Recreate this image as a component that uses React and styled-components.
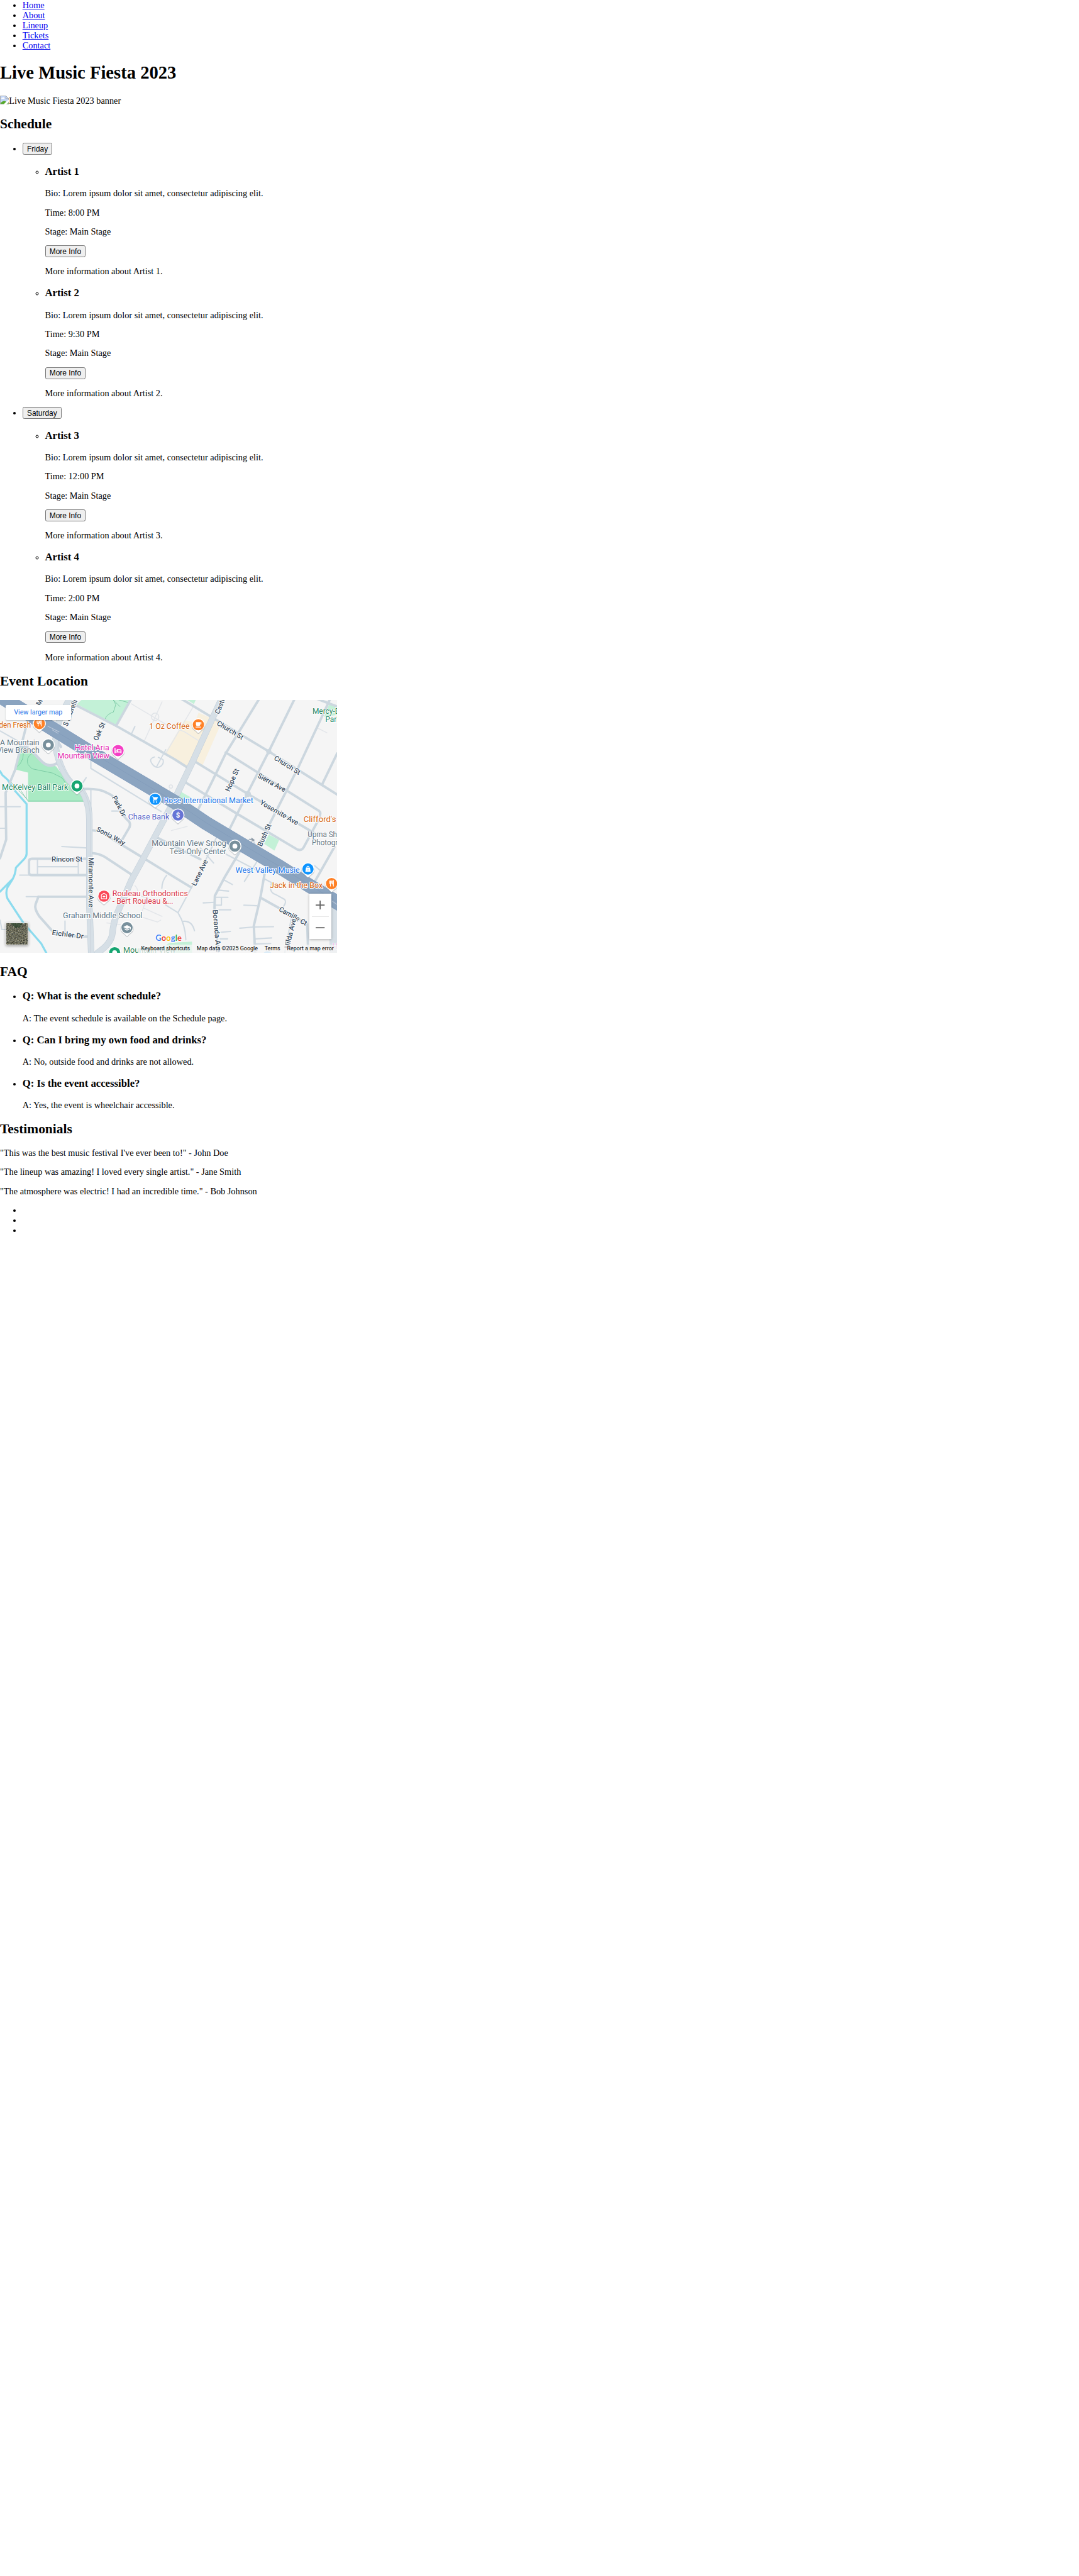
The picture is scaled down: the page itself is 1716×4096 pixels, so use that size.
import React from "react";
import styled, { createGlobalStyle, css } from "styled-components";

/* 1rem = 14.3px; every measure below is n/16 rem */
const u = (n) => `${n / 16}rem`;

const Global = createGlobalStyle`
  html { font-size: 14.3px; }
  body { margin: 0; background: #fff; color: #000; }
`;

const Page = styled.main`
  min-height: 4096px;
  font-family: "Liberation Serif", "Times New Roman", serif;
  font-size: 1rem;
  line-height: ${u(18)};
`;

const List = styled.ul`
  margin: ${(p) => p.$top || 0} 0 ${(p) => p.$bottom || 0};
  padding: 0 0 0 ${u(40)};
  list-style-type: ${(p) => p.$marker || "disc"};
`;

const NavLink = styled.a`
  color: #0000ee;
  text-decoration: underline;
`;

const Title = styled.h1`
  margin: ${u(21.44)} 0;
  font-size: 2rem;
  line-height: ${u(36.6)};
`;

const SectionTitle = styled.h2`
  margin: ${u(19.92)} 0;
  font-size: 1.5rem;
  line-height: ${u(27)};
`;

const ItemTitle = styled.h3`
  margin: ${u(18.72)} 0;
  font-size: 1.17rem;
  line-height: ${u(22)};
`;

const Text = styled.p`
  margin: 1rem 0;
`;

const Button = styled.button`
  display: inline-block;
  box-sizing: border-box;
  height: ${u(21)};
  margin: 0;
  padding: 0 ${u(7)};
  border: 1px solid #767676;
  border-radius: ${u(3)};
  background: #efefef;
  color: #000;
  font: ${u(13.333)} / ${u(18)} "Liberation Sans", Arial, sans-serif;
  vertical-align: top;
`;

const ButtonLine = styled.div`
  height: ${u(21)};
  line-height: ${u(21)};
`;

const Banner = styled.div`
  display: flex;
  height: ${u(18)};
  line-height: ${u(18)};
  svg { width: 1rem; height: 1rem; flex: none; }
`;

const MapFrame = styled.div`
  position: relative;
  width: ${u(600)};
  height: ${u(450)};
  margin-bottom: ${u(4)};
  overflow: hidden;
  background: #f5f5f5;
  font-family: Roboto, Arial, sans-serif;
  > svg { display: block; width: 100%; height: 100%; }
`;

const LargerMap = styled.a`
  position: absolute;
  left: ${u(10)};
  top: ${u(10)};
  width: ${u(116)};
  height: ${u(26)};
  line-height: ${u(26)};
  text-align: center;
  background: #fff;
  border-radius: 2px;
  box-shadow: 0 1px 2px rgba(60, 64, 67, 0.3);
  color: #1a73e8;
  font-size: ${u(12)};
`;

const ZoomBox = styled.div`
  position: absolute;
  right: ${u(10)};
  top: ${u(345)};
  width: ${u(40)};
  height: ${u(81)};
  display: flex;
  flex-direction: column;
  align-items: center;
  background: #fff;
  box-shadow: 0 1px 4px rgba(0, 0, 0, 0.3);
`;

const ZoomKey = styled.span`
  flex: 1;
  display: flex;
  align-items: center;
  justify-content: center;
  width: ${u(30)};
  ${(p) => p.$divided && css`border-bottom: 1px solid #e6e6e6;`}
  svg { width: ${u(16)}; height: ${u(16)}; }
`;

const Satellite = styled.div`
  position: absolute;
  left: ${u(10)};
  top: ${u(397)};
  width: ${u(38)};
  height: ${u(38)};
  border: ${u(2)} solid #fff;
  border-radius: 2px;
  box-shadow: 0 1px 4px rgba(0, 0, 0, 0.4);
  svg { display: block; width: 100%; height: 100%; }
`;

const Attribution = styled.div`
  position: absolute;
  right: 0;
  bottom: 0;
  display: flex;
  height: ${u(14)};
  font-size: ${u(10)};
  line-height: ${u(14)};
  color: #000;
  white-space: nowrap;
  span {
    padding: 0 ${u(6)};
    background: rgba(245, 245, 245, 0.75);
  }
`;

const BrokenImage = () => (
  <svg viewBox="0 0 16 16" aria-hidden="true">
    <path d="M.5.5H10.500L15.500 5.500V7L6 15.500H.5Z" fill="#c3d6f8" />
    <path d="M2.500 5.500a1.500 1.500 0 0 1 2-1.800 2 2 0 0 1 3.500 1.300l.3.700H2.500Z" fill="#fff" />
    <path d="M1 15V13L5 10Q8 8.500 11 11L7 15Z" fill="#57a92c" />
    <path d="M7 16L16 7.500V11L11 16Z" fill="#fff" />
    <path d="M12 15.500L15.500 12V15.500Z" fill="#57a92c" />
    <path d="M7 15.500H.5V.5H10.500L15.500 5.500V8M10.500.5V5.500H15.500M15.500 11V15.500H11" fill="none" stroke="#a3a3a3" />
  </svg>
);

const minorRoads = [
  "M405 28L620 138L930 315L1000 360",
  "M620 138L700-5",
  "M970-5L1435 275L1800 505",
  "M1205 280L1540 490L1700 590Q1714 598 1708 615L1700 640L1622 785Q1610 808 1585 797L1270 610L985 437",
  "M1035 325L1320 500L1660 700L1700 725",
  "M1380 0L1205 285L1130 440L1050 600",
  "M1570 0L1435 275L1320 500L1220 700",
  "M1760 0L1590 365L1430 680L1370 790",
  "M1800 285L1720 450", "M1695-5L1800 35",
  "M1785 785L1680 970",
  "M1280 810L1200 945L1147 1045L1145 1110L1165 1350",
  "M1412 930L1390 1055L1355 1205L1362 1350",
  "M1390 1055L1640 1195L1645 1350",
  "M490 695L530 700L760 840L930 945L1020 1000",
  "M490 817Q530 820 560 838L715 940",
  "M840 735L1070 850",
  "M470 847H170Q155 847 155 862V922Q155 935 170 935H470",
  "M205 1050H470M205 1050L190 1090Q182 1115 210 1155L290 1245Q350 1263 470 1263",
  "M145 120L80 375L30 495L33 745L0 845",
  "M450 475Q530 472 570 495Q625 517 640 570T690 650Q700 670 685 690L650 750",
];
const thinRoads = [
  "M485 315V365L860 595", "M0 165L150 250", "M485 480V590", "M720 142L700 185", "M460 415L440 445", "M597 593H660",
  "M1155 735L1110 830L1020 1005L950 1135L885 1095M950 1135Q990 1200 992 1280M975 1182Q1025 1175 1038 1232",
  "M1370 865L1305 968M1200 820L1412 930", "M1195 960L1240 985M1165 1015L1220 1020M1150 1053H1217M1085 1083L1145 1080M1182 1053V1095H1150M1150 1120H1232",
  "M1175 1240L1230 1235M1175 1275H1215", "M1302 1095L1370 1098M1280 1218L1355 1212L1460 1210M1362 1275L1450 1270M1362 1302L1445 1300",
  "M1412 955L1450 975Q1430 1025 1475 1040L1520 1065Q1530 1080 1515 1100",
  "M330 782L470 790M200 847V930M418 847V935M200 890H418M105 935H160M140 1050H210M347 1180V1250",
  "M0 570H108M0 685H33", "M890 935Q865 965 864 1005", "M1710 910L1680 885", "M0 1175L10 1225H40",
  "M1310 765Q1325 738 1350 745L1370 790M1555 1165L1520 1350", "M1070 790L1140 870",
];
const faintRoads = [
  "M700 20L885 130L985 170L1065 220M865 10L770 220M1035 30L885 285", "M1695 150L1745 175",
  "M920 560L895 510L905 480", "M570 1190L650 1200M720 990Q740 1010 735 1040L790 1060M765 1110L865 1155M760 1160L840 1185L858 1175M780 1065L760 1125", "M915 697L1000 675",
];
const parkTrails = "M120 250Q140 320 88 360M170 285Q135 310 150 345L170 367L280 390L330 415L347 438M88 450L150 540H450M60 440L145 530M140 455V525M562 100Q570 75 605 65L618 25L605 0M605 0L640 35M635 0L690 15";
const arterials = [
  "M370-5L325 85L300 160M300 185Q285 250 325 350T420 465Q477 530 477 640V1095L487 1355",
  "M1190-20L1140 85L1030 325L920 555L760 855L700 965L625 1140Q605 1190 600 1245Q595 1300 520 1350",
];
const highway = "M-20-32L480 277L930 543L1100 657L1280 765L1480 883L1650 990L1820 1093";

const roadLabels = [
  ["Church St", 1155, 132, 31, 158], ["Church St", 1460, 317, 32, 158], ["Sierra Ave", 1372, 412, 29, 165],
  ["Yosemite Ave", 1385, 555, 30, 230], ["Hope St", 1225, 492, -66, 130], ["Castro St", 1170, 78, -68, 150],
  ["Oak St", 521, 220, -66, 103], ["Park Dr", 597, 520, 62, 120], ["S Shoreline Blvd", 360, 143, -69, 255],
  ["Sonia Way", 512, 698, 28, 168], ["Rincon St", 275, 861, 0, 165], ["Eichler Dr", 276, 1254, 7, 170],
  ["Miramonte Ave", 473, 840, 90, 267], ["Lane Ave", 1045, 995, -64, 150], ["Bush St", 1397, 785, -66, 128],
  ["Camille Ct", 1486, 1125, 29, 165], ["Boranda Ave", 1135, 1120, 85, 230], ["Nilda Ave", 1542, 1330, -76, 165],
  ["Mo", 213, 33, -62, 55],
];

const poiLabels = [
  ["Golden Fresh", -63, 147, 228, "#d5620c"], ["A Mountain", 0, 240, 210, "#5f7684"], ["View Branch", -17, 281, 228, "#5f7684"],
  ["Hotel Aria", 399, 270, 184, "#e325ad"], ["Mountain View", 307, 312, 277, "#e325ad"], ["McKelvey Ball Park", 10, 480, 354, "#16865e"],
  ["1 Oz Coffee", 796, 153, 216, "#d5620c"], ["Mercy-Bush", 1668, 75, 210, "#2a8763"], ["Park", 1737, 117, 80, "#2a8763"],
  ["Rose International Market", 874, 552, 478, "#1a73e8"], ["Chase Bank", 684, 637, 220, "#5667c9"],
  ["Mountain View Smog", 810, 780, 398, "#5f7684"], ["Test Only Center", 905, 822, 303, "#5f7684"],
  ["Clifford's BBQ", 1620, 651, 270, "#d5620c"], ["Upma Shah", 1642, 733, 200, "#5f7684"], ["Photography", 1665, 775, 220, "#5f7684"],
  ["West Valley Music", 1257, 924, 343, "#1a73e8"], ["Jack in the Box", 1440, 1002, 283, "#d5620c"],
  ["Rouleau Orthodontics", 600, 1047, 403, "#d93646"], ["- Bert Rouleau &...", 600, 1089, 325, "#d93646"],
  ["Graham Middle School", 336, 1164, 424, "#5f7684"], ["Mountain View", 658, 1350, 280, "#2a8763"],
  ["H", 1775, 1330, 26, "#e98fcf"],
];

const glyphs = {
  dot: <circle r="13" fill="#fff" />,
  food: <path d="M-12-16V-5Q-12 0-6 0V15M-6-16V0M0-16V-5Q0 0-6 0M10 15V2H5V-8Q5-16 10-16Z" fill="none" stroke="#fff" strokeWidth="4" />,
  bed: <path d="M-16-12V13M-16 8H16M16 13V0Q16-5 10-5H-3V8M-9-2V-1" fill="none" stroke="#fff" strokeWidth="5" strokeLinecap="round" />,
  cart: <g fill="#fff"><path d="M-17-15H-10L-8-11H16L9 3H-5L-7 7H12V10H-12L-8 1L-13-12H-17Z" /><circle cx="-7" cy="15" r="3.500" /><circle cx="8" cy="15" r="3.500" /></g>,
  cup: <path d="M-13-14H16V-3H10Q10 7 2 7H-6Q-13 7-13 0ZM10-11V-6H13V-11ZM-15 11H14V15H-15Z" fill="#fff" fillRule="evenodd" />,
  dollar: <text y="13" textAnchor="middle" fill="#fff" fontSize="38" fontWeight="700">$</text>,
  bag: <path d="M-14 15L-11-7H-8Q-8-17 0-17T8-7H11L14 15ZM-4-7H4Q4-13 0-13T-4-7ZM-6 2Q0 12 6 2Q0 7-6 2Z" fill="#fff" fillRule="evenodd" />,
  clinic: <path d="M-14 14V-6L0-16L14-6V14ZM-7 2H7M0-5V9" fill="none" stroke="#fff" strokeWidth="4" />,
  school: <path d="M-20-3L0-13L20-3V9H16V0L0 7ZM-12 4L0 10L12 4V10L0 16L-12 10Z" fill="#fff" />,
};

const pins = [
  [210, 126, "#ff8126", "food"], [258, 240, "#78909c", "dot"], [630, 270, "#f43fc5", "bed"], [411, 459, "#16a571", "dot"],
  [828, 530, "#0d94ff", "cart"], [1059, 132, "#ff8126", "cup"], [950, 614, "#6674d5", "dollar"], [1254, 780, "#78909c", "dot"],
  [1644, 902, "#0d94ff", "bag"], [1770, 980, "#ff8126", "food"], [555, 1047, "#fb4858", "clinic"], [678, 1215, "#78909c", "school"],
  [612, 1349, "#16a571", "dot"],
];

const Pin = ({ x, y, color, glyph }) => (
  <g transform={`translate(${x} ${y})`}>
    <path d="M-36 2A36 36 0 1 1 36 2C36 25 14 31 6 43Q0 50-6 43C-14 31-36 25-36 2Z" fill="#8a9298" opacity=".45" transform="translate(0 3)" />
    <path d="M-35 0A35 35 0 1 1 35 0C35 23 14 29 6 41Q0 48-6 41C-14 29-35 23-35 0Z" fill="#fff" />
    <circle r="30" fill={color} />
    {glyphs[glyph]}
  </g>
);

const StreetMap = () => (
  <svg viewBox="0 0 1800 1350" fontFamily="Roboto, Arial, sans-serif">
    <rect width="1800" height="1350" fill="#f5f5f5" />
    <path d="M100 245L165 262L210 325L300 355L350 425L430 485L453 543H150V388L85 372Z" fill="#aaeac4" />
    <path d="M435 0L410 22L620 137L700 0ZM1000 0H1045L1035 22ZM960 487L1020 520L1000 550L945 520ZM1435 718L1490 748L1465 804L1410 768Z" fill="#c3f1d7" />
    <path d="M1760 15L1800 30V80L1730 90Z" fill="#c3f1d7" />
    <path d="M890 1305Q900 1295 930 1295L1025 1290V1350H890Z" fill="#c3f1d7" />
    <path d="M1060 68L1182 122L1082 347L1030 325L1000 357L880 285L985 107L1040 122Z" fill="#f8f0de" />
    <g fill="none" strokeLinecap="round" strokeLinejoin="round">
      <path d={parkTrails} stroke="#69bf98" strokeWidth="2.500" />
      <path d="M0 380L12 400L40 425L80 485L142 555V820Q142 835 130 848L85 895Q82 930 68 955L40 1000Q28 1030 40 1060L125 1190L220 1300L250 1355M68 955L0 1023" stroke="#8cdbee" strokeWidth="11" />
      {faintRoads.map((d) => <path key={d} d={d} stroke="#e3e6ea" strokeWidth="5" />)}
      {thinRoads.map((d) => <path key={d} d={d} stroke="#d0dae2" strokeWidth="7" />)}
      {minorRoads.map((d) => <path key={d} d={d} stroke="#ccd7df" strokeWidth="13" />)}
      <path d="M290 160L300 210L325 250M120 245Q165 262 210 315T300 340" stroke="#ccd5df" strokeWidth="15" />
      <circle cx="828" cy="90" r="20" stroke="#e0e4e8" strokeWidth="5" />
      <circle cx="912" cy="462" r="9" stroke="#e0e4e8" strokeWidth="5" />
      <circle cx="1435" cy="276" r="14" fill="#ccd7df" /><circle cx="1323" cy="502" r="12" stroke="#ccd7df" strokeWidth="9" />
      <path d="M885 265L835 358M825 304Q795 312 808 335Q825 365 850 358Q878 345 870 318L845 306" stroke="#d0dae2" strokeWidth="6" />
      {arterials.map((d) => (
        <g key={d}><path d={d} stroke="#c2ced8" strokeWidth="34" /><path d={d} stroke="#d6dfe6" strokeWidth="30" /></g>
      ))}
      <path d="M310 220Q300 300 345 375T440 480Q490 550 483 700V1350" stroke="#c5d0da" strokeWidth="2" />
      <path d="M1780 1100V1350" stroke="#d6dfe6" strokeWidth="42" />
      <path d={highway} stroke="#7f9abc" strokeWidth="75" />
      <path d={highway} stroke="#8ba4c0" strokeWidth="71" />
      <path d="M200 110L480 275L930 541L1100 655L1280 763L1480 881L1820 1091" stroke="#7f98b8" strokeWidth="2" />
      <path d="M255 140L315 170M280 160L310 178M1775 1075L1800 1092" stroke="#b8c6d7" strokeWidth="4" />
      <path d="M1333 743L1355 748M1343 738L1357 748L1343 753" stroke="#8b98a5" strokeWidth="5" />
    </g>
    <circle cx="1428" cy="1370" r="29" fill="#8cc9fa" />
    <g fill="#3d5063" stroke="#fff" strokeWidth="7" strokeLinejoin="round" paintOrder="stroke" fontSize="38" fontWeight="500">
      {roadLabels.map(([t, x, y, r, w]) => (
        <text key={t + x} transform={`translate(${x} ${y}) rotate(${r})`} textLength={w} lengthAdjust="spacingAndGlyphs">{t}</text>
      ))}
    </g>
    {pins.map(([x, y, color, glyph]) => <Pin key={`${x}-${y}`} x={x} y={y} color={color} glyph={glyph} />)}
    <g stroke="#fff" strokeWidth="7" strokeLinejoin="round" paintOrder="stroke" fontSize="42">
      {poiLabels.map(([t, x, y, w, c]) => (
        <text key={t + x} x={x} y={y} fill={c} textLength={w} lengthAdjust="spacingAndGlyphs">{t}</text>
      ))}
    </g>
    <text x="830" y="1284" fontFamily="Lato, sans-serif" fontSize="47" fontWeight="700" textLength="140" stroke="#fff" strokeWidth="7" paintOrder="stroke" lengthAdjust="spacingAndGlyphs">
      <tspan fill="#4285f4">G</tspan><tspan fill="#ea4335">o</tspan><tspan fill="#fbbc04">o</tspan><tspan fill="#4285f4">g</tspan><tspan fill="#34a853">l</tspan><tspan fill="#ea4335">e</tspan>
    </text>
  </svg>
);

const SatelliteThumb = () => (
  <svg viewBox="0 0 38 38">
    <filter id="terrain" x="0" y="0" width="100%" height="100%" colorInterpolationFilters="sRGB">
      <feTurbulence type="fractalNoise" baseFrequency=".5" numOctaves="4" seed="4" />
      <feColorMatrix values=".7 .3 0 0 -.08 .65 .35 0 0 -.08 .5 .4 .05 0 -.12 0 0 0 0 1" />
    </filter>
    <rect width="38" height="38" fill="#5f604e" />
    <rect width="38" height="38" filter="url(#terrain)" />
    <path d="M8 0H29L25 7L16 8Z" fill="#213d26" opacity=".6" />
  </svg>
);

const Artist = ({ n, time }) => (
  <li>
    <ItemTitle>Artist {n}</ItemTitle>
    <Text>Bio: Lorem ipsum dolor sit amet, consectetur adipiscing elit.</Text>
    <Text>Time: {time}</Text>
    <Text>Stage: Main Stage</Text>
    <ButtonLine><Button>More Info</Button></ButtonLine>
    <Text>More information about Artist {n}.</Text>
  </li>
);

const days = [
  ["Friday", [[1, "8:00 PM"], [2, "9:30 PM"]]],
  ["Saturday", [[3, "12:00 PM"], [4, "2:00 PM"]]],
];
const faq = [
  ["What is the event schedule?", "The event schedule is available on the Schedule page."],
  ["Can I bring my own food and drinks?", "No, outside food and drinks are not allowed."],
  ["Is the event accessible?", "Yes, the event is wheelchair accessible."],
];
const quotes = [
  `"This was the best music festival I've ever been to!" - John Doe`,
  `"The lineup was amazing! I loved every single artist." - Jane Smith`,
  `"The atmosphere was electric! I had an incredible time." - Bob Johnson`,
];

export default function App() {
  return (
    <Page>
      <Global />
      <nav>
        <List $bottom="1rem">
          {["Home", "About", "Lineup", "Tickets", "Contact"].map((t) => (
            <li key={t}><NavLink href="#">{t}</NavLink></li>
          ))}
        </List>
      </nav>
      <Title>Live Music Fiesta 2023</Title>
      <Banner><BrokenImage />Live Music Fiesta 2023 banner</Banner>
      <SectionTitle>Schedule</SectionTitle>
      <List $top="1rem" $bottom="1rem">
        {days.map(([day, artists]) => (
          <li key={day}>
            <ButtonLine><Button>{day}</Button></ButtonLine>
            <List $marker="circle">
              {artists.map(([n, time]) => <Artist key={n} n={n} time={time} />)}
            </List>
          </li>
        ))}
      </List>
      <SectionTitle>Event Location</SectionTitle>
      <MapFrame>
        <StreetMap />
        <LargerMap>View larger map</LargerMap>
        <Satellite><SatelliteThumb /></Satellite>
        <ZoomBox>
          <ZoomKey $divided><svg viewBox="0 0 16 16"><path d="M0 8H16M8 0V16" stroke="#666" strokeWidth="2" /></svg></ZoomKey>
          <ZoomKey><svg viewBox="0 0 16 16"><path d="M0 8H16" stroke="#666" strokeWidth="2" /></svg></ZoomKey>
        </ZoomBox>
        <Attribution>
          <span>Keyboard shortcuts</span><span>Map data ©2025 Google</span><span>Terms</span><span>Report a map error</span>
        </Attribution>
      </MapFrame>
      <SectionTitle>FAQ</SectionTitle>
      <List $top="1rem" $bottom="1rem">
        {faq.map(([q, a]) => (
          <li key={q}><ItemTitle>Q: {q}</ItemTitle><Text>A: {a}</Text></li>
        ))}
      </List>
      <SectionTitle>Testimonials</SectionTitle>
      {quotes.map((q) => <Text key={q}>{q}</Text>)}
      <List $top="1rem" $bottom="1rem"><li /><li /><li /></List>
    </Page>
  );
}
